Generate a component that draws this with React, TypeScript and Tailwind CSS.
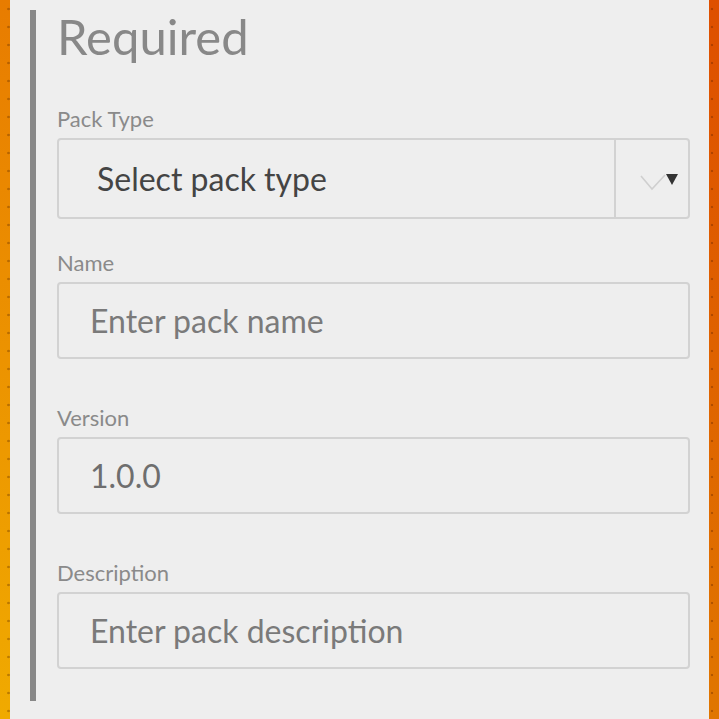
import React from "react";

const font = { fontFamily: "Lato, 'Open Sans', sans-serif" };

function Label({ children }: { children: React.ReactNode }) {
  return <div className="text-[22px] leading-none text-[#8a8a8a] mb-[8px]">{children}</div>;
}

function TextInput({ value, dark }: { value: string; dark?: boolean }) {
  return (
    <div className="h-[77px] rounded-[4px] border-2 border-[#d2d2d2] flex items-center pl-[31px]">
      <span className={`text-[32px] leading-none ${dark ? "text-[#6e6e6e]" : "text-[#7a7a7a]"}`}>{value}</span>
    </div>
  );
}

export default function App() {
  return (
    <div className="flex w-[719px] h-[719px] overflow-hidden" style={font}>
      <div className="w-[10px] h-full bg-[linear-gradient(to_bottom,#e87c00,#f0aa00)] relative">
        <div className="absolute inset-0 bg-[radial-gradient(circle_at_8.5px_9px,rgba(90,40,0,0.35)_1px,transparent_1.6px)] bg-[length:10px_18px]" />
      </div>
      <div className="flex-1 bg-[#eeeeee] pl-[20px] pr-[19px] pt-[10px]">
        <div className="border-l-[6px] border-[#888888] pl-[21px] h-[691px]">
          <div className="pt-[2px] text-[49px] leading-none text-[#888888]">Required</div>
          <div className="mt-[47px]">
            <Label>Pack Type</Label>
            <div className="h-[81px] rounded-[4px] border-2 border-[#d2d2d2] flex">
              <div className="flex-1 flex items-center pl-[38px]">
                <span className="text-[32px] leading-none text-[#444444]">Select pack type</span>
              </div>
              <div className="w-[74px] border-l-2 border-[#d2d2d2] relative">
                <svg className="absolute left-[24px] top-[32px]" width="40" height="22" viewBox="0 0 40 22">
                  <polyline points="1,4 12,17 25,3" fill="none" stroke="#cfcfcf" strokeWidth="1.6" />
                  <polygon points="26,2 38,2 32,13" fill="#333333" />
                </svg>
              </div>
            </div>
          </div>
          <div className="mt-[33px]">
            <Label>Name</Label>
            <TextInput value="Enter pack name" />
          </div>
          <div className="mt-[48px]">
            <Label>Version</Label>
            <TextInput value="1.0.0" dark />
          </div>
          <div className="mt-[48px]">
            <Label>Description</Label>
            <TextInput value="Enter pack description" />
          </div>
        </div>
      </div>
      <div className="w-[10px] h-full bg-[linear-gradient(to_bottom,#de4f00,#e07600)] relative">
        <div className="absolute inset-0 bg-[radial-gradient(circle_at_3px_9px,rgba(90,30,0,0.35)_1px,transparent_1.6px)] bg-[length:10px_18px]" />
      </div>
    </div>
  );
}
